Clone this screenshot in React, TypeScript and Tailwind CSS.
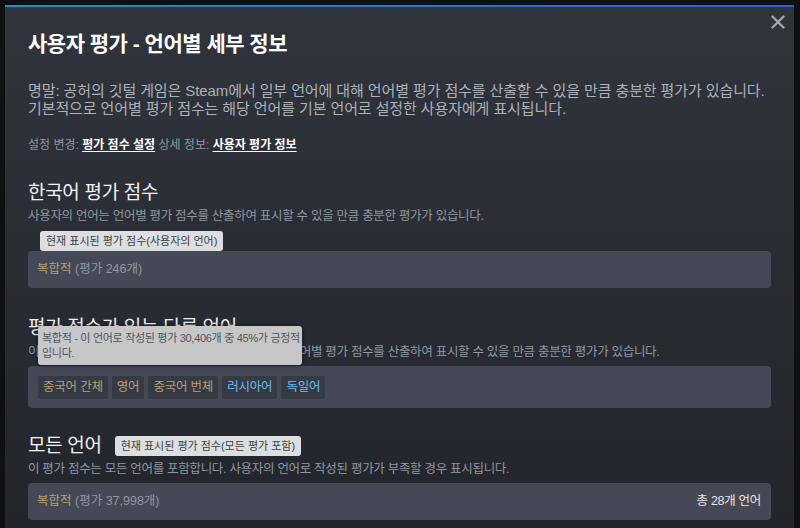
import { X } from "lucide-react";

const otherLanguages = [
  { name: "중국어 간체", tone: "mixed" },
  { name: "영어", tone: "mixed" },
  { name: "중국어 번체", tone: "mixed" },
  { name: "러시아어", tone: "positive" },
  { name: "독일어", tone: "positive" },
];

function ScoreBox({ count, right }: { count: string; right?: string }) {
  return (
    <div className="flex h-[37px] items-center justify-between rounded-[4px] bg-[#454955] pl-[9px] pr-[10px] text-[12.5px]">
      <div>
        <span className="text-[#b9a074]">복합적</span>
        <span className="text-[#8f98a0]"> (평가 {count}개)</span>
      </div>
      {right && <span className="text-[#e5e7ea] tracking-[-0.3px]">{right}</span>}
    </div>
  );
}

function Badge({ children }: { children: React.ReactNode }) {
  return (
    <span className="flex h-[20px] items-center rounded-[3px] bg-[#dcdedf] px-[6px] text-[11px] text-[#3b3f47]">
      {children}
    </span>
  );
}

export default function App() {
  return (
    <div className="h-[528px] w-[800px] overflow-hidden bg-[#0f1014] pl-[5px] pt-[5px] font-['Liberation_Sans','Noto_Sans_CJK_KR',sans-serif]">
      <div className="relative h-[523px] w-[789px] bg-gradient-to-b from-[#30343c] to-[#22252c]">
        {/* top accent */}
        <div className="h-[2px] bg-gradient-to-r from-[#1f8fc4] to-[#2d5ed6]" />

        <button
          type="button"
          className="absolute right-[5px] top-[6px] text-[#a4a8ad]"
          aria-label="닫기"
        >
          <X size={22} strokeWidth={2.6} />
        </button>

        <div className="px-[23px] pt-[23px]">
          <h1 className="text-[21px] font-bold leading-[28px] tracking-[-0.5px] text-white">
            사용자 평가 - 언어별 세부 정보
          </h1>

          <div className="mt-[24px] text-[15px] leading-[18px] tracking-[-0.1px] text-[#acb2b8]">
            <p className="whitespace-nowrap">
              명말: 공허의 깃털 게임은 Steam에서 일부 언어에 대해 언어별 평가 점수를 산출할 수 있을 만큼 충분한 평가가 있습니다.
            </p>
            <p className="whitespace-nowrap">
              기본적으로 언어별 평가 점수는 해당 언어를 기본 언어로 설정한 사용자에게 표시됩니다.
            </p>
          </div>

          <p className="mt-[19px] text-[12px] leading-[16px] text-[#8f98a0]">
            설정 변경:{" "}
            <span className="font-bold text-white underline underline-offset-2">평가 점수 설정</span>{" "}
            상세 정보:{" "}
            <span className="font-bold text-white underline underline-offset-2">사용자 평가 정보</span>
          </p>

          {/* 한국어 */}
          <h2 className="mt-[27px] text-[19px] leading-[26px] tracking-[-0.3px] text-[#f0f0f0]">
            한국어 평가 점수
          </h2>
          <p className="mt-[1px] text-[12.5px] leading-[18px] tracking-[-0.3px] text-[#8f98a0]">
            사용자의 언어는 언어별 평가 점수를 산출하여 표시할 수 있을 만큼 충분한 평가가 있습니다.
          </p>
          <div className="ml-[12px] mt-[6px] flex">
            <Badge>현재 표시된 평가 점수(사용자의 언어)</Badge>
          </div>
          <ScoreBox count="246" />

          {/* 다른 언어 */}
          <div className="relative mt-[27px]">
            <h2 className="text-[19px] leading-[26px] tracking-[-0.3px] text-[#f0f0f0]">
              평가 점수가 있는 다른 언어
            </h2>
            <p className="mt-[2px] text-[12.5px] leading-[18px] tracking-[-0.3px] text-[#8f98a0]">
              이 언어들로 작성된 평가는 각 충분한 수에 도달하여 언어별 평가 점수를 산출하여 표시할 수
              있을 만큼 충분한 평가가 있습니다.
            </p>
            <div className="absolute left-[10px] top-[11px] w-[264px] whitespace-nowrap rounded-[3px] bg-[#c7c7c7] px-[4px] pb-[4px] pt-[5px] text-[11px] leading-[15px] tracking-[-0.3px] text-[#50545a] shadow-[0_0_4px_rgba(0,0,0,0.5)]">
              복합적 - 이 언어로 작성된 평가 30,406개 중 45%가 긍정적
              <br />
              입니다.
            </div>
          </div>
          <div className="mt-[5px] flex h-[42px] items-center gap-[4px] rounded-[4px] bg-[#454955] px-[10px]">
            {otherLanguages.map((lang) => (
              <span
                key={lang.name}
                className={`flex h-[23px] items-center rounded-[2px] bg-[#363a43] px-[5px] text-[12.5px] tracking-[-0.2px] ${
                  lang.tone === "mixed" ? "text-[#b9a074]" : "text-[#66c0f4]"
                }`}
              >
                {lang.name}
              </span>
            ))}
          </div>

          {/* 모든 언어 */}
          <div className="mt-[25px] flex items-center gap-[13px]">
            <h2 className="text-[19px] leading-[26px] tracking-[-0.3px] text-[#f0f0f0]">모든 언어</h2>
            <Badge>현재 표시된 평가 점수(모든 평가 포함)</Badge>
          </div>
          <p className="mt-[1px] text-[12.5px] leading-[18px] tracking-[-0.3px] text-[#8f98a0]">
            이 평가 점수는 모든 언어를 포함합니다. 사용자의 언어로 작성된 평가가 부족할 경우 표시됩니다.
          </p>
          <div className="mt-[5px]">
            <ScoreBox count="37,998" right="총 28개 언어" />
          </div>
        </div>
      </div>
    </div>
  );
}
